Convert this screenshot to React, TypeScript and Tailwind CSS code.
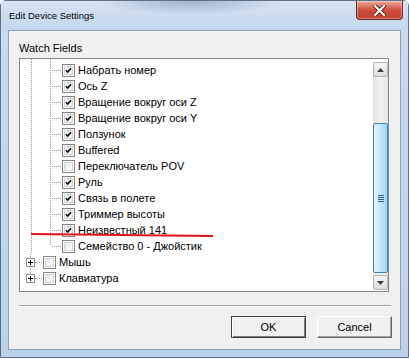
import React from "react";

type Item = { label: string; checked: boolean };

const joystick: Item[] = [
  { label: "Набрать номер", checked: true },
  { label: "Ось Z", checked: true },
  { label: "Вращение вокруг оси Z", checked: true },
  { label: "Вращение вокруг оси Y", checked: true },
  { label: "Ползунок", checked: true },
  { label: "Buffered", checked: true },
  { label: "Переключатель POV", checked: false },
  { label: "Руль", checked: true },
  { label: "Связь в полете", checked: true },
  { label: "Триммер высоты", checked: true },
  { label: "Неизвестный 141", checked: true },
  { label: "Семейство 0 - Джойстик", checked: false },
];

const font = "font-['Liberation_Sans',Arial,sans-serif]";

function CheckBox({ checked }: { checked: boolean }) {
  return (
    <div className="w-[13px] h-[13px] shrink-0 border border-[#858585] bg-white p-[1px]">
      <div className="w-full h-full border border-[#d6d6d6] bg-gradient-to-br from-[#e6e6e6] to-white flex items-center justify-center">
        {checked && (
          <svg width="9" height="9" viewBox="0 0 9 9">
            <path d="M1.2 4.2 L3.4 6.5 L7.8 1.8" fill="none" stroke="#111" strokeWidth="2" />
          </svg>
        )}
      </div>
    </div>
  );
}

function ChildRow({ item, last }: { item: Item; last: boolean }) {
  return (
    <div className="h-[16px] flex items-center">
      <svg width="42" height="16" className="shrink-0">
        <line x1="11.5" y1="0" x2="11.5" y2="16" stroke="#a0a0a0" strokeDasharray="1 1" />
        <line x1="30.5" y1="0" x2="30.5" y2={last ? 8 : 16} stroke="#a0a0a0" strokeDasharray="1 1" />
        <line x1="32" y1="8.5" x2="42" y2="8.5" stroke="#a0a0a0" strokeDasharray="1 1" />
      </svg>
      <CheckBox checked={item.checked} />
      <span className="ml-[3px] text-[11px] leading-[16px] text-black whitespace-nowrap">{item.label}</span>
    </div>
  );
}

function RootRow({ label, last }: { label: string; last: boolean }) {
  return (
    <div className="h-[16px] flex items-center">
      <svg width="23" height="16" className="shrink-0">
        <line x1="10.5" y1="0" x2="10.5" y2={last ? 8 : 16} stroke="#a0a0a0" strokeDasharray="1 1" />
        <line x1="15" y1="8.5" x2="23" y2="8.5" stroke="#a0a0a0" strokeDasharray="1 1" />
        <rect x="6.5" y="4.5" width="8" height="8" fill="white" stroke="#919191" />
        <rect x="8" y="8" width="5" height="1" fill="#000" />
        <rect x="10" y="6" width="1" height="5" fill="#000" />
      </svg>
      <CheckBox checked={false} />
      <span className="ml-[3px] text-[11px] leading-[16px] text-black whitespace-nowrap">{label}</span>
    </div>
  );
}

function ScrollButton({ up }: { up: boolean }) {
  return (
    <div className="h-[15px] border border-[#b4b4b4] rounded-[2px] bg-gradient-to-b from-[#f6f6f6] to-[#dedede] flex items-center justify-center">
      <svg width="7" height="4" viewBox="0 0 7 4">
        {up ? <path d="M0 4 L3.5 0 L7 4 Z" fill="#3d3d3d" /> : <path d="M0 0 L3.5 4 L7 0 Z" fill="#3d3d3d" />}
      </svg>
    </div>
  );
}

function ScrollBar() {
  return (
    <div className="w-[15px] shrink-0 mt-[3px] mb-[1px] flex flex-col bg-gradient-to-r from-[#e3e3e3] via-[#f2f2f2] to-[#e3e3e3]">
      <ScrollButton up />
      <div className="h-[46px]" />
      <div className="h-[150px] border border-[#3c7fb1] rounded-[2px] bg-gradient-to-r from-[#e3f3fd] via-[#c4e4fb] to-[#a8d4f5] flex items-center justify-center">
        <div className="flex flex-col gap-[1px]">
          <div className="w-[6px] h-[1px] bg-[#2a5d84]" />
          <div className="w-[6px] h-[1px] bg-[#2a5d84]" />
          <div className="w-[6px] h-[1px] bg-[#2a5d84]" />
          <div className="w-[6px] h-[1px] bg-[#2a5d84]" />
        </div>
      </div>
      <div className="flex-1" />
      <ScrollButton up={false} />
    </div>
  );
}

function DialogButton({ label, isDefault }: { label: string; isDefault?: boolean }) {
  return (
    <button
      type="button"
      className={
        "w-[75px] h-[22px] bg-[#f0f0f0] text-[11px] text-black " +
        (isDefault
          ? "border border-[#404040] shadow-[inset_1px_1px_0_#ffffff,inset_-1px_-1px_0_#7a7a7a]"
          : "border border-t-white border-l-white border-r-[#696969] border-b-[#696969] shadow-[inset_-1px_-1px_0_#a0a0a0]")
      }
    >
      {label}
    </button>
  );
}

export default function App() {
  return (
    <div className={`w-[409px] h-[358px] overflow-hidden ${font}`}>
      <div className="w-full h-full flex flex-col border border-[#5f7189] rounded-t-[6px] bg-gradient-to-b from-[#c9dbef] via-[#c3d6ec] to-[#bcd1ea]">
        {/* title bar */}
        <div className="h-[29px] flex items-start justify-between bg-[radial-gradient(ellipse_90px_14px_at_190px_0px,#9fb3c9,transparent),linear-gradient(to_bottom,#d6e3f2,#c4d7ed)]">
          <span className="mt-[9px] ml-[8px] text-[9.5px] leading-[12px] text-black">Edit Device Settings</span>
          <div className="mr-[5px] w-[47px] h-[19px] rounded-b-[4px] border border-t-0 border-[#6d2b22] bg-gradient-to-b from-[#e9a99c] via-[#cf4e3b] to-[#c2402f] flex items-center justify-center shadow-[inset_0_0_0_1px_rgba(255,255,255,0.35)]">
            <svg width="13" height="11" viewBox="0 0 13 11">
              <path d="M2 1 L11 10 M11 1 L2 10" stroke="#5b1a12" strokeWidth="4" strokeLinecap="square" />
              <path d="M2 1 L11 10 M11 1 L2 10" stroke="#ffffff" strokeWidth="2.2" strokeLinecap="square" />
            </svg>
          </div>
        </div>

        {/* client area */}
        <div className="ml-[7px] w-[393px] h-[320px] border border-[#8ea2bb] bg-[#f0f0f0] flex flex-col">
          <div className="mt-[10px] ml-[10px] h-[14px] text-[11px] leading-[14px] text-black">Watch Fields</div>

          <div className="mt-[3px] ml-[10px] w-[370px] h-[234px] border border-[#868686] bg-white flex relative">
            <div className="flex-1 overflow-hidden">
              <svg width="42" height="3" className="block">
                <line x1="11.5" y1="0" x2="11.5" y2="3" stroke="#a0a0a0" strokeDasharray="1 1" />
                <line x1="30.5" y1="0" x2="30.5" y2="3" stroke="#a0a0a0" strokeDasharray="1 1" />
              </svg>
              {joystick.map((item, i) => (
                <ChildRow key={item.label} item={item} last={i === joystick.length - 1} />
              ))}
              <RootRow label="Мышь" last={false} />
              <RootRow label="Клавиатура" last />
            </div>
            <ScrollBar />
            {/* hand drawn red underline */}
            <svg className="absolute left-0 top-0 pointer-events-none" width="368" height="232">
              <line x1="11" y1="175" x2="193" y2="177" stroke="#e0141b" strokeWidth="2" />
            </svg>
          </div>

          <div className="mt-[13px] ml-[10px] w-[372px] h-[2px] border-t border-[#a0a0a0] border-b border-b-white" />

          <div className="mt-[9px] mr-[8px] flex justify-end gap-[11px]">
            <DialogButton label="OK" isDefault />
            <DialogButton label="Cancel" />
          </div>
        </div>
      </div>
    </div>
  );
}
